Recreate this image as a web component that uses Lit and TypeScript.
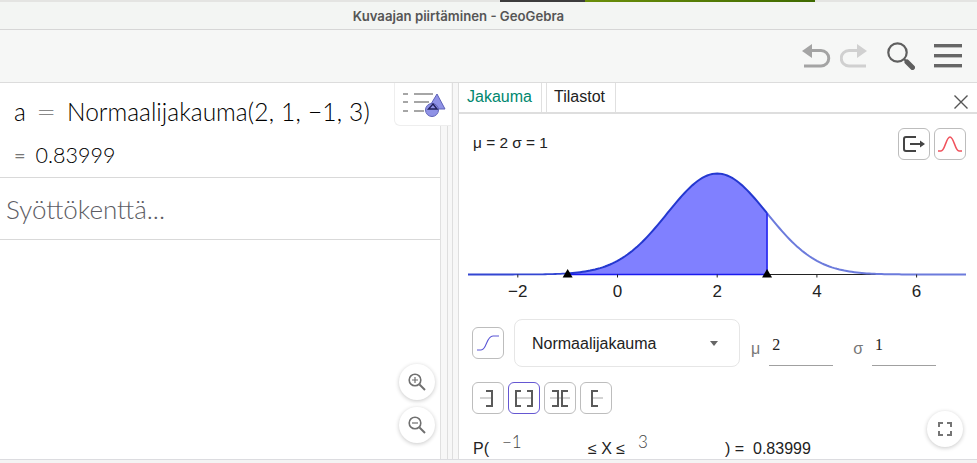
import { LitElement, html, css, svg } from 'lit';
import { customElement } from 'lit/decorators.js';

const X0 = 149.5;
const UNIT = 49.85;
const BASE = 104.5;
const PEAK = 101;

const px = (v: number) => X0 + v * UNIT;
const py = (v: number) => BASE - PEAK * Math.exp(-((v - 2) ** 2) / 2);

function curve(from: number, to: number) {
  const pts: string[] = [];
  for (let v = from; v <= to + 0.001; v += 0.05) {
    pts.push(`${px(v).toFixed(2)},${py(v).toFixed(2)}`);
  }
  return pts.join(' ');
}

@customElement('app-root')
export class AppRoot extends LitElement {
  static styles = css`
    :host { display: block; }
    .page {
      width: 977px;
      height: 463px;
      overflow: hidden;
      display: flex;
      flex-direction: column;
      background: #fff;
      font-family: "Liberation Sans", Arial, sans-serif;
      color: #222;
    }
    .strip { height: 2px; flex: none; display: flex; background: #e4e4e2; }
    .strip .dark { width: 85px; margin-left: 500px; background: #3c3c3c; }
    .strip .green { width: 230px; background: linear-gradient(90deg, #6b8e0a, #3f6a00); }
    .title {
      height: 28px;
      flex: none;
      box-sizing: border-box;
      padding: 0 60px 0 0;
      display: flex;
      align-items: center;
      justify-content: center;
      background: #f3f5f3;
      border-bottom: 1px solid #d6d6d6;
      font: 600 13.2px Inter, sans-serif;
      color: #565656;
    }
    .toolbar {
      height: 53px;
      flex: none;
      box-sizing: border-box;
      display: flex;
      align-items: center;
      justify-content: flex-end;
      padding: 0 15px 0 0;
      background: #f6f7f6;
      border-bottom: 1px solid #dcdcdc;
    }
    .toolbar svg { display: block; }
    .toolbar .redo { margin-left: 9px; }
    .toolbar .search { margin-left: 20px; }
    .toolbar .menu { margin-left: 19px; }
    .main { flex: 1; min-height: 0; display: flex; }
    .algebra {
      width: 440px;
      flex: none;
      position: relative;
      border-right: 1px solid #e0e0e0;
      box-sizing: content-box;
    }
    .row-a { height: 95px; box-sizing: border-box; border-bottom: 1px solid #d9d9d9; padding: 12px 0 0 14px; }
    .formula { font: 300 24.5px/34px Lato, sans-serif; color: #000; white-space: nowrap; }
    .formula .eq { display: inline-block; transform: scaleX(1.4); color: #888; margin: 0 14px 0 13px; }
    .formula .args { letter-spacing: 0.2px; }
    .result { font: 300 21.5px/34px Lato, sans-serif; color: #000; margin-top: 9px; }
    .result .eq { color: #777; margin-right: 10px; font-size: 20px; font-weight: 400; }
    .input {
      height: 62px;
      box-sizing: border-box;
      border-bottom: 1px solid #d9d9d9;
      padding-left: 6px;
      display: flex;
      align-items: center;
      font: 300 26px Lato, sans-serif;
      color: #5c5c64;
    }
    .style-tab {
      position: absolute;
      top: 0;
      left: 394px;
      width: 57px;
      height: 43px;
      box-sizing: border-box;
      padding-left: 8px;
      background: #fff;
      border: 1px solid #eee;
      border-top: none;
      border-right: none;
      border-radius: 0 0 0 6px;
      display: flex;
      align-items: center;
    }
    .round {
      position: absolute;
      width: 36px;
      height: 36px;
      border-radius: 50%;
      background: #fff;
      box-shadow: 0 1px 4px rgba(0, 0, 0, 0.22);
      display: flex;
      align-items: center;
      justify-content: center;
    }
    .zoom-in { left: 399px; top: 281px; }
    .zoom-out { left: 399px; top: 324px; }
    .fullscreen { right: 14px; top: 297px; }
    .gutter {
      width: 18px;
      flex: none;
      box-sizing: border-box;
      background: #f7f7f7;
      display: flex;
    }
    .gutter i { display: block; height: 100%; border-right: 1px solid #dedede; }
    .gutter i:nth-child(1) { width: 7px; }
    .gutter i:nth-child(2) { width: 5px; }
    .gutter i:nth-child(3) { width: 6px; }
    .dist { flex: 1; min-width: 0; position: relative; display: flex; flex-direction: column; }
    .tabs {
      height: 31px;
      flex: none;
      box-sizing: border-box;
      display: flex;
      border-bottom: 2px solid #dedede;
      position: relative;
    }
    .tab {
      box-sizing: border-box;
      height: 29px;
      padding-bottom: 2px;
      display: flex;
      align-items: center;
      font-size: 16px;
      border-right: 1px solid #e0e0e0;
      color: #222;
    }
    .tab.active { color: #00876f; width: 83px; padding-left: 8px; }
    .tab.plain { width: 70px; margin-left: 4px; padding-left: 7px; border-left: 1px solid #e0e0e0; }
    .close { position: absolute; right: 9px; top: 12px; }
    .panel { padding: 0 0 0 13px; position: relative; flex: 1; min-height: 0; overflow: hidden; }
    .params-head {
      display: flex;
      justify-content: space-between;
      align-items: center;
      padding: 14px 11px 0 0;
      font-size: 15.4px;
      height: 46px;
      box-sizing: border-box;
    }
    .params-head span { margin: 0 0 2px 1px; }
    .btns { display: flex; gap: 4px; }
    .btn {
      width: 32px;
      height: 32px;
      box-sizing: border-box;
      border: 1px solid #bdbdbd;
      border-radius: 6px;
      background: #fff;
      display: flex;
      align-items: center;
      justify-content: center;
    }
    .btn.on { border-color: #6557d2; }
    .chart { display: block; margin: 10px 0 0 -4px; }
    .chart text { font: 17px "Liberation Sans", Arial, sans-serif; fill: #222; text-anchor: middle; }
    .dist-row { display: flex; align-items: flex-start; margin-top: 19px; }
    .dist-row .btn { margin-top: 8px; }
    .select {
      width: 226px;
      height: 48px;
      box-sizing: border-box;
      margin-left: 10px;
      border: 1px solid #e6e6e6;
      border-radius: 8px;
      display: flex;
      align-items: center;
      justify-content: space-between;
      padding: 1px 21px 0 17px;
      font-size: 16px;
      color: #222;
    }
    .caret { width: 0; height: 0; border-left: 4.5px solid transparent; border-right: 4.5px solid transparent; border-top: 5px solid #666; }
    .sym { font-size: 16px; color: #777; margin: 21px 9px 0 11px; }
    .sym + .field { margin-right: 4px; }
    .sym.second { margin: 21px 9px 0 16px; }
    .field {
      width: 64px;
      height: 27px;
      box-sizing: border-box;
      margin-top: 20px;
      padding-left: 3px;
      border-bottom: 1px solid #a0a0a0;
      font: 16px/12px "Liberation Serif", serif;
      color: #222;
    }
    .bounds { display: flex; gap: 4px; margin-top: 15px; }
    .prob { display: flex; align-items: baseline; font-size: 16px; line-height: 18px; margin: 25px 0 0 1px; white-space: nowrap; height: 18px; position: relative; }
    .prob .v { font: 300 17px/18px Lato, sans-serif; color: #444; position: relative; top: -6px; }
    .p1 { width: 29px; }
    .p2 { width: 86px; }
    .p3 { width: 50px; }
    .p4 { width: 87px; }
    .p5 { width: 28px; }
    .bottom { height: 4px; flex: none; background: #f4f4f4; border-top: 1px solid #dcdce0; box-sizing: border-box; }
  `;

  render() {
    return html`
      <div class="page">
        <div class="strip"><span class="dark"></span><span class="green"></span></div>
        <div class="title">Kuvaajan piirtäminen - GeoGebra</div>
        <div class="toolbar">
          <svg class="undo" width="29" height="24" viewBox="0 0 29 24" fill="none">
            <path d="M7 6.500H19a7.500 7.500 0 0 1 0 15.500H2" stroke="#a4a4a4" stroke-width="3"/>
            <path d="M0 7L10 0V14Z" fill="#a4a4a4"/>
          </svg>
          <svg class="redo" width="27" height="24" viewBox="0 0 27 24" fill="none">
            <path d="M20 6.500H9a7.500 7.500 0 0 0 0 15.500H26" stroke="#d0d0d0" stroke-width="3"/>
            <path d="M27 7L17 0V14Z" fill="#d0d0d0"/>
          </svg>
          <svg class="search" width="28" height="28" viewBox="0 0 28 28" fill="none">
            <circle cx="10.500" cy="10.500" r="9.200" stroke="#5f5f5f" stroke-width="2.200"/>
            <path d="M17 17L20 20" stroke="#5f5f5f" stroke-width="2"/>
            <path d="M20 20L25.500 25.500" stroke="#5f5f5f" stroke-width="5" stroke-linecap="round"/>
          </svg>
          <svg class="menu" width="28" height="24" viewBox="0 0 28 24" fill="#666">
            <rect x="0" y="0" width="28" height="3.400"/>
            <rect x="0" y="10" width="28" height="3.400"/>
            <rect x="0" y="20" width="28" height="3.400"/>
          </svg>
        </div>
        <div class="main">
          <div class="algebra">
            <div class="row-a">
              <div class="formula"><span>a</span><span class="eq">=</span>Normaalijakauma<span class="args">(2, 1, −1, 3)</span></div>
              <div class="result"><span class="eq">=</span>0.83999</div>
            </div>
            <div class="input">Syöttökenttä...</div>
            <div class="style-tab">
              <svg width="44" height="28" viewBox="0 0 44 28">
                <g fill="#a6a6a6">
                  <rect x="0" y="3" width="5" height="2"/><rect x="0" y="11" width="5" height="2"/><rect x="0" y="20" width="5" height="2"/>
                  <rect x="11" y="3" width="19" height="2"/><rect x="11" y="11" width="15" height="2"/><rect x="11" y="20" width="10" height="2"/>
                </g>
                <path d="M34 4L42 19H25Z" fill="#8f92e6" stroke="#5f63b8" stroke-width="1"/>
                <circle cx="29" cy="20" r="6.500" fill="#8f92e6" stroke="#5f63b8" stroke-width="1"/>
                <path d="M30 14L34 19H25.500Z" fill="none" stroke="#22225c" stroke-width="1.400"/>
              </svg>
            </div>
            <div class="round zoom-in">
              <svg width="20" height="20" viewBox="0 0 20 20" fill="none" stroke="#6f6f6f">
                <circle cx="8" cy="8" r="5.800" stroke-width="1.600"/>
                <path d="M12.500 12.500L18 18" stroke-width="2"/>
                <path d="M5 8H11M8 5V11" stroke-width="1.200"/>
              </svg>
            </div>
            <div class="round zoom-out">
              <svg width="20" height="20" viewBox="0 0 20 20" fill="none" stroke="#6f6f6f">
                <circle cx="8" cy="8" r="5.800" stroke-width="1.600"/>
                <path d="M12.500 12.500L18 18" stroke-width="2"/>
                <path d="M5 8H11" stroke-width="1.200"/>
              </svg>
            </div>
          </div>
          <div class="gutter"><i></i><i></i><i></i></div>
          <div class="dist">
            <div class="tabs">
              <div class="tab active">Jakauma</div>
              <div class="tab plain">Tilastot</div>
              <svg class="close" width="14" height="14" viewBox="0 0 14 14" stroke="#555" stroke-width="1.400">
                <path d="M0.500 0.500L13.500 13.500M13.500 0.500L0.500 13.500"/>
              </svg>
            </div>
            <div class="panel">
              <div class="params-head">
                <span>μ = 2 σ = 1</span>
                <div class="btns">
                  <div class="btn">
                    <svg width="22" height="16" viewBox="0 0 22 16" fill="none" stroke="#444" stroke-width="2">
                      <path d="M13 1H3a2 2 0 0 0-2 2V13a2 2 0 0 0 2 2H13"/>
                      <path d="M7 8H18"/>
                      <path d="M22 8L17 4.500V11.500Z" fill="#444" stroke="none"/>
                    </svg>
                  </div>
                  <div class="btn">
                    <svg width="24" height="16" viewBox="0 0 24 16" fill="none" stroke="#f0525c" stroke-width="1.600">
                      <path d="M0 15H3C7 15 8 1 12 1S17 15 21 15H24"/>
                    </svg>
                  </div>
                </div>
              </div>
              <svg class="chart" width="498" height="130" viewBox="0 0 498 130">
                ${this.renderChart()}
              </svg>
              <div class="dist-row">
                <div class="btn">
                  <svg width="24" height="20" viewBox="0 0 24 20" fill="none" stroke="#5b57d6" stroke-width="1.200">
                    <path d="M1 17H5C11 17 10 3 17 3H23"/>
                  </svg>
                </div>
                <div class="select">Normaalijakauma<span class="caret"></span></div>
                <span class="sym">μ</span>
                <div class="field">2</div>
                <span class="sym second">σ</span>
                <div class="field">1</div>
              </div>
              <div class="bounds">
                <div class="btn">${this.bracket('right')}</div>
                <div class="btn on">${this.bracket('both')}</div>
                <div class="btn">${this.bracket('out')}</div>
                <div class="btn">${this.bracket('left')}</div>
              </div>
              <div class="prob">
                <span class="p1">P(</span><span class="v p2">−1</span><span class="p3">≤ X ≤</span><span class="v p4">3</span><span class="p5">) =</span><span>0.83999</span>
              </div>
              <div class="round fullscreen">
                <svg width="14" height="14" viewBox="0 0 14 14" fill="none" stroke="#757575" stroke-width="2">
                  <path d="M1 5V1H5M9 1H13V5M13 9V13H9M5 13H1V9"/>
                </svg>
              </div>
            </div>
          </div>
        </div>
        <div class="bottom"></div>
      </div>
    `;
  }

  renderChart() {
    const inside = curve(-1, 3);
    const ticks = [-2, 0, 2, 4, 6];
    return svg`
      <path d="M${px(3)} ${BASE}H498" stroke="#222" stroke-width="1"/>
      <polygon points="${px(-1)},${BASE} ${inside} ${px(3)},${BASE}" fill="#8080ff"/>
      <polyline points="${curve(-3, -1)}" fill="none" stroke="#3346d2" stroke-width="1.800"/>
      <polyline points="${curve(3, 7)}" fill="none" stroke="#6c7bdc" stroke-width="2"/>
      <polyline points="${inside}" fill="none" stroke="#2438d0" stroke-width="2"/>
      <path d="M${px(3)} ${py(3)}V${BASE}M${px(-1)} ${BASE}H${px(3)}" stroke="#1a1aee" stroke-width="1.500" fill="none"/>
      ${ticks.map(t => svg`
        <path d="M${px(t)} ${BASE}v3" stroke="#222" stroke-width="1"/>
        <text x="${px(t)}" y="127">${t < 0 ? '−' + -t : t}</text>
      `)}
      ${[-1, 3].map(t => svg`<polygon points="${px(t)},${BASE - 5.500} ${px(t) + 5},${BASE + 3} ${px(t) - 5},${BASE + 3}" fill="#000"/>`)}
    `;
  }

  bracket(kind: string) {
    const paths: Record<string, string> = {
      right: 'M14 9H20V24H14',
      both: 'M13 9H8V24H13M19 9H24V24H19',
      out: 'M8 9H14V24H8M24 9H18V24H24',
      left: 'M18 9H12V24H18',
    };
    const line: Record<string, string> = {
      right: 'M8 16H20',
      both: 'M8 16H24',
      out: 'M6 16H26',
      left: 'M12 16H23',
    };
    return html`<svg width="30" height="30" viewBox="1 1 30 30" fill="none">
      <path d="${line[kind]}" stroke="#c4c4c4" stroke-width="1.500"/>
      <path d="${paths[kind]}" stroke="#5a5a5a" stroke-width="2"/>
    </svg>`;
  }
}
